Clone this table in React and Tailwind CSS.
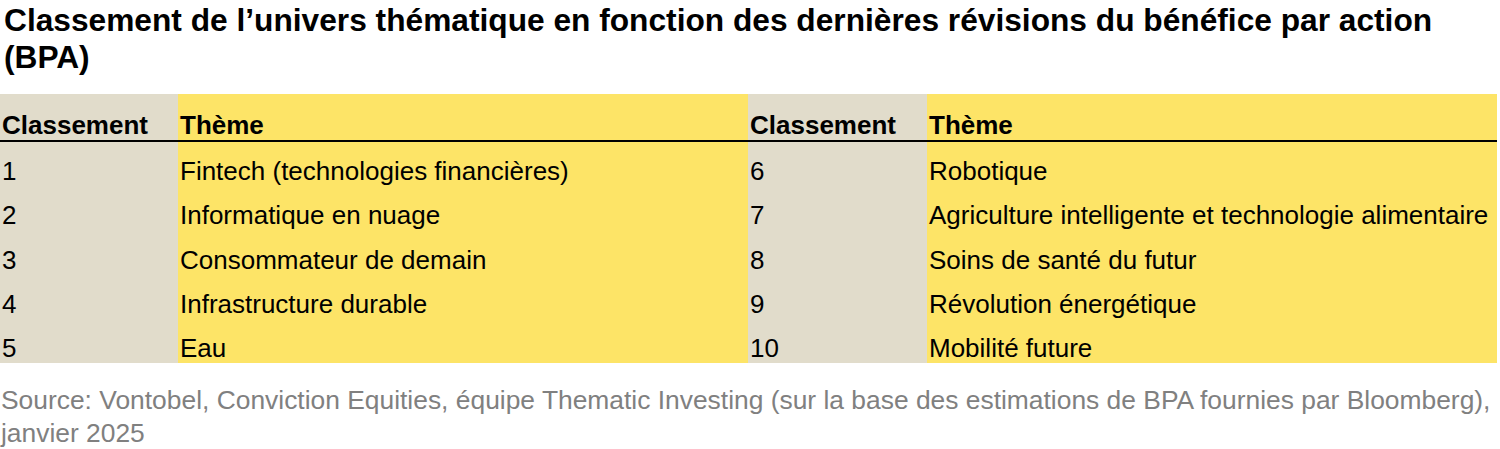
const left = [
  ['1', 'Fintech (technologies financières)'],
  ['2', 'Informatique en nuage'],
  ['3', 'Consommateur de demain'],
  ['4', 'Infrastructure durable'],
  ['5', 'Eau'],
];
const right = [
  ['6', 'Robotique'],
  ['7', 'Agriculture intelligente et technologie alimentaire'],
  ['8', 'Soins de santé du futur'],
  ['9', 'Révolution énergétique'],
  ['10', 'Mobilité future'],
];

export default function App() {
  return (
    <div className="w-[1500px] h-[449px] bg-white text-black font-['Liberation_Sans',Arial,sans-serif]">
      <h1 className="pl-[4px] pt-[2px] text-[31.7px] leading-[37px] font-bold w-[1470px]">
        Classement de l’univers thématique en fonction des dernières révisions du bénéfice par action (BPA)
      </h1>
      <div className="mt-[18px] w-[1497px] grid grid-cols-[178px_570px_179px_570px] text-[26px] leading-[30px]">
        <div className="bg-[#e1dccb] h-[48px] flex items-end pl-[2px] font-bold border-b-2 border-black">Classement</div>
        <div className="bg-[#fde467] h-[48px] flex items-end pl-[2px] font-bold border-b-2 border-black">Thème</div>
        <div className="bg-[#e1dccb] h-[48px] flex items-end pl-[2px] font-bold border-b-2 border-black">Classement</div>
        <div className="bg-[#fde467] h-[48px] flex items-end pl-[2px] font-bold border-b-2 border-black">Thème</div>
        {left.map(([n, t], i) => (
          <div key={n} className="contents">
            <div className="bg-[#e1dccb] h-[44.2px] flex items-end pl-[2px]">{n}</div>
            <div className="bg-[#fde467] h-[44.2px] flex items-end pl-[2px]">{t}</div>
            <div className="bg-[#e1dccb] h-[44.2px] flex items-end pl-[2px]">{right[i][0]}</div>
            <div className="bg-[#fde467] h-[44.2px] flex items-end pl-[2px] whitespace-nowrap">{right[i][1]}</div>
          </div>
        ))}
      </div>
      <p className="mt-[21px] pl-[1px] text-[26.4px] leading-[33px] text-[#808080] w-[1497px]">
        Source: Vontobel, Conviction Equities, équipe Thematic Investing (sur la base des estimations de BPA fournies par Bloomberg), janvier 2025
      </p>
    </div>
  );
}
